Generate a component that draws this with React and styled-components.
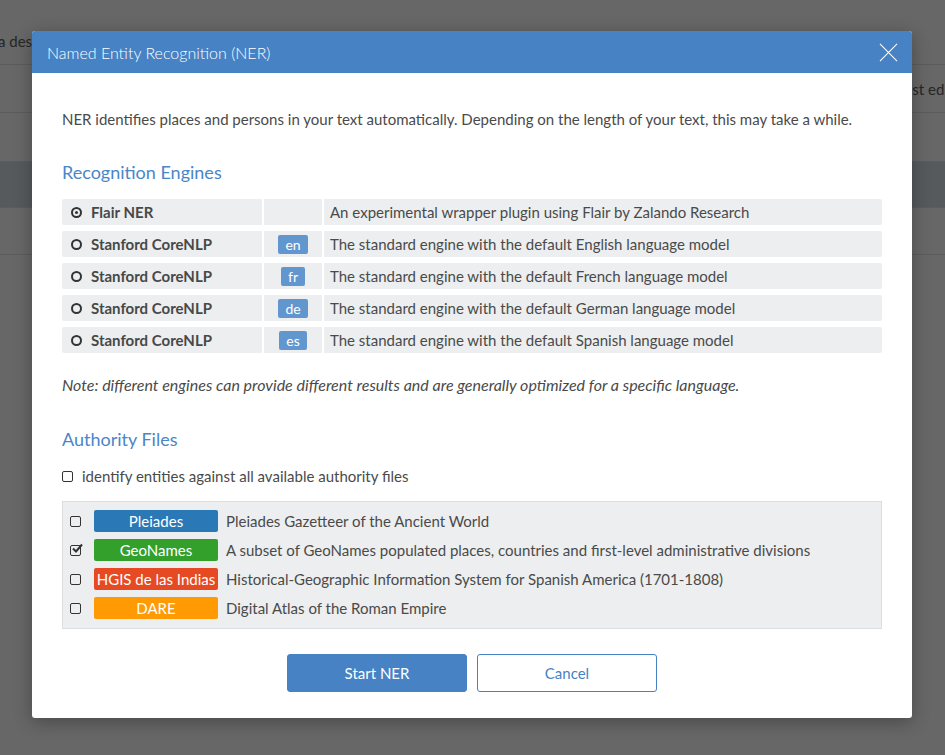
import React from "react";
import styled, { createGlobalStyle } from "styled-components";

const GlobalStyle = createGlobalStyle`
  html, body {
    margin: 0;
    padding: 0;
    background: #676767;
    font-family: "Lato", "Liberation Sans", sans-serif;
  }
`;

const Page = styled.div`
  position: relative;
  width: 945px;
  height: 755px;
  overflow: hidden;
  background: #676767;
`;

const PageRow = styled.div`
  height: ${(p) => p.h}px;
  border-bottom: 1px solid ${(p) => (p.line ? "#5c5c5c" : "transparent")};
  background: ${(p) => p.bg || "transparent"};
  display: flex;
  align-items: ${(p) => p.align || "center"};
  justify-content: ${(p) => p.justify || "flex-start"};
  box-sizing: border-box;
  color: #262626;
  font-size: 15px;
`;

const PageText = styled.span`
  margin: ${(p) => p.m || "0"};
  white-space: nowrap;
`;

const Modal = styled.div`
  position: absolute;
  left: 32px;
  top: 31px;
  width: 880px;
  background: #fff;
  border-radius: 3px;
  box-shadow: 0 4px 18px rgba(0, 0, 0, 0.3);
  overflow: hidden;
  color: #4a4a4a;
`;

const Header = styled.div`
  height: 42px;
  background: #4682c4;
  display: flex;
  align-items: center;
  justify-content: space-between;
  padding: 0 14px 0 15px;
  color: #fff;
  font-size: 16px;
  font-weight: 300;
`;

const CloseBtn = styled.svg`
  width: 19px;
  height: 19px;
`;

const Body = styled.div`
  padding: 36px 30px 26px;
`;

const Intro = styled.p`
  margin: 0;
  font-size: 15px;
  line-height: 20px;
`;

const Heading = styled.h3`
  margin: ${(p) => p.mt}px 0 15px;
  font-size: 18px;
  line-height: 24px;
  font-weight: 400;
  color: #4a86c8;
`;

const EngineGrid = styled.div`
  display: grid;
  grid-template-columns: 200px 58px 1fr;
  column-gap: 2px;
  row-gap: 6px;
`;

const Cell = styled.div`
  height: 26px;
  background: #eceeef;
  border-radius: ${(p) => p.radius || "0"};
  display: flex;
  align-items: center;
  justify-content: ${(p) => (p.center ? "center" : "flex-start")};
  padding: 0 ${(p) => p.px || 0}px;
  font-size: 15px;
  box-sizing: border-box;
`;

const Radio = styled.span`
  width: 11px;
  height: 11px;
  border: 2px solid #333;
  border-radius: 50%;
  box-sizing: border-box;
  margin-right: 9px;
  display: inline-flex;
  align-items: center;
  justify-content: center;
  &::after {
    content: "";
    width: 3px;
    height: 3px;
    border-radius: 50%;
    background: ${(p) => (p.checked ? "#333" : "transparent")};
  }
`;

const EngineName = styled.span`
  font-weight: 700;
  color: #484848;
`;

const LangBadge = styled.span`
  background: #6196cf;
  color: #fff;
  font-size: 14px;
  line-height: 19px;
  padding: 0 7px;
  border-radius: 2px;
`;

const Note = styled.p`
  margin: 22px 0 0;
  font-style: italic;
  font-size: 16px;
  line-height: 20px;
`;

const CheckLine = styled.label`
  display: flex;
  align-items: center;
  height: 20px;
  font-size: 15px;
`;

const CheckBox = styled.span`
  width: 11px;
  height: 11px;
  border: 1.5px solid #333;
  border-radius: 2px;
  box-sizing: border-box;
  margin-right: ${(p) => p.gap}px;
  position: relative;
  flex-shrink: 0;
`;

const Tick = styled.svg`
  position: absolute;
  left: 0px;
  top: -3px;
  width: 12px;
  height: 11px;
`;

const AuthBox = styled.div`
  margin-top: 15px;
  background: #eceeef;
  border: 1px solid #dcdfe1;
  padding: 8px 7px 9px;
  display: flex;
  flex-direction: column;
  gap: 7px;
`;

const AuthRow = styled.div`
  display: flex;
  align-items: center;
  height: 22px;
  font-size: 15px;
`;

const AuthBadge = styled.span`
  width: 124px;
  height: 22px;
  background: ${(p) => p.color};
  color: #fff;
  border-radius: 2px;
  display: flex;
  align-items: center;
  justify-content: center;
  margin-right: 8px;
  font-size: 15px;
  white-space: nowrap;
`;

const Buttons = styled.div`
  margin-top: 25px;
  display: flex;
  justify-content: center;
  gap: 10px;
`;

const Button = styled.button`
  width: 180px;
  height: 38px;
  border-radius: 3px;
  font-family: inherit;
  font-size: 15px;
  border: 1px solid #4682c4;
  background: ${(p) => (p.primary ? "#4682c4" : "#fff")};
  color: ${(p) => (p.primary ? "#fff" : "#4682c4")};
`;

const engines = [
  { name: "Flair NER", lang: null, desc: "An experimental wrapper plugin using Flair by Zalando Research", checked: true },
  { name: "Stanford CoreNLP", lang: "en", desc: "The standard engine with the default English language model" },
  { name: "Stanford CoreNLP", lang: "fr", desc: "The standard engine with the default French language model" },
  { name: "Stanford CoreNLP", lang: "de", desc: "The standard engine with the default German language model" },
  { name: "Stanford CoreNLP", lang: "es", desc: "The standard engine with the default Spanish language model" },
];

const authorities = [
  { label: "Pleiades", color: "#2a78b6", desc: "Pleiades Gazetteer of the Ancient World" },
  { label: "GeoNames", color: "#33a02c", desc: "A subset of GeoNames populated places, countries and first-level administrative divisions", checked: true },
  { label: "HGIS de las Indias", color: "#e64a22", desc: "Historical-Geographic Information System for Spanish America (1701-1808)" },
  { label: "DARE", color: "#ff9a02", desc: "Digital Atlas of the Roman Empire" },
];

function Check({ checked, gap }) {
  return (
    <CheckBox gap={gap}>
      {checked && (
        <Tick viewBox="0 0 12 11">
          <path d="M2 5.5 L5 8.5 L11 1.5" fill="none" stroke="#333" strokeWidth="2" />
        </Tick>
      )}
    </CheckBox>
  );
}

export default function App() {
  return (
    <Page>
      <GlobalStyle />
      <PageRow h={65} line align="flex-end">
        <PageText m="0 0 14px -2px">a des</PageText>
      </PageRow>
      <PageRow h={48} line justify="flex-end">
        <PageText m="0 -3px 0 0">st edi</PageText>
      </PageRow>
      <PageRow h={49} line />
      <PageRow h={46} line bg="#575a5d" />
      <PageRow h={47} line />

      <Modal>
        <Header>
          <span>Named Entity Recognition (NER)</span>
          <CloseBtn viewBox="0 0 20 20">
            <path d="M1 1 L19 19 M19 1 L1 19" stroke="#fff" strokeWidth="1.1" fill="none" />
          </CloseBtn>
        </Header>
        <Body>
          <Intro>
            NER identifies places and persons in your text automatically. Depending on the length of your text, this may take a while.
          </Intro>

          <Heading mt={31}>Recognition Engines</Heading>
          <EngineGrid>
            {engines.map((e, i) => (
              <React.Fragment key={i}>
                <Cell px={9} radius="2px 0 0 2px">
                  <Radio checked={e.checked} />
                  <EngineName>{e.name}</EngineName>
                </Cell>
                <Cell center>{e.lang && <LangBadge>{e.lang}</LangBadge>}</Cell>
                <Cell px={6} radius="0 2px 2px 0">{e.desc}</Cell>
              </React.Fragment>
            ))}
          </EngineGrid>

          <Note>
            Note: different engines can provide different results and are generally optimized for a specific language.
          </Note>

          <Heading mt={32}>Authority Files</Heading>
          <CheckLine>
            <Check gap={9} />
            identify entities against all available authority files
          </CheckLine>

          <AuthBox>
            {authorities.map((a) => (
              <AuthRow key={a.label}>
                <Check checked={a.checked} gap={13} />
                <AuthBadge color={a.color}>{a.label}</AuthBadge>
                {a.desc}
              </AuthRow>
            ))}
          </AuthBox>

          <Buttons>
            <Button primary>Start NER</Button>
            <Button>Cancel</Button>
          </Buttons>
        </Body>
      </Modal>
    </Page>
  );
}
